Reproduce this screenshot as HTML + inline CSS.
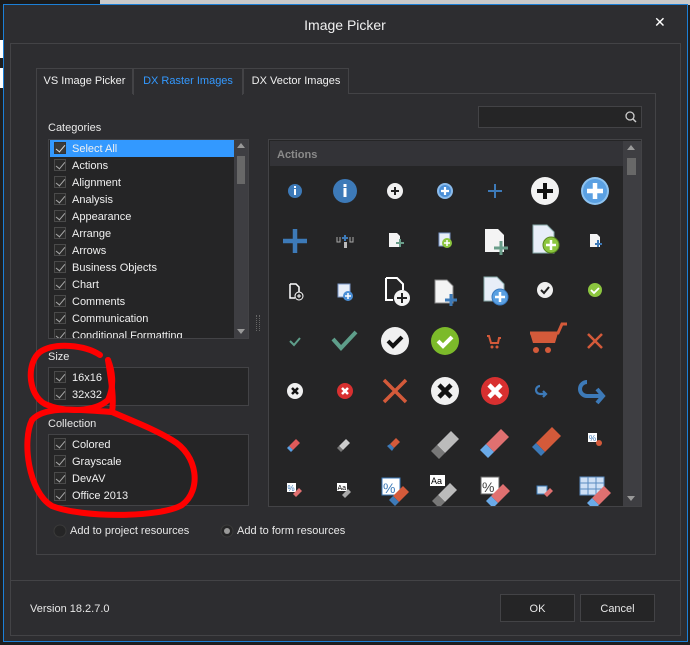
<!DOCTYPE html>
<html><head><meta charset="utf-8"><style>
*{margin:0;padding:0;box-sizing:border-box}
body{width:690px;height:645px;background:#1e1e1e;position:relative;overflow:hidden;font-family:"Liberation Sans",sans-serif;font-size:11px;color:#e8e8e8}
.a{position:absolute}
.win{left:3px;top:4px;width:685px;height:638px;background:#2d2d30;border:1px solid #1c7fd6}
.box{border:1px solid #434346}
.lb{background:#252526;border:1px solid #434346}
.row{position:absolute;left:1px;height:17px;width:184px;line-height:19px;padding-left:22px;color:#f0f0f0;font-size:11px}
.cb{position:absolute;left:4px;top:2px;width:12px;height:12px;border:1px solid #4a4a4a;background:#2a2a2a}
.cb:after{content:"";position:absolute;left:3px;top:0px;width:4px;height:8px;border-right:1.5px solid #aaa;border-bottom:1.5px solid #aaa;transform:rotate(40deg)}
.sel{background:#3399ff}
.sel .cb{background:#3b3b3b;border-color:#333}
.sel .cb:after{border-color:#ddd}
.tab{top:68px;height:26px;border:1px solid #434346;border-bottom:none;line-height:24px;text-align:center;font-size:11px;background:#2d2d30}
.btn{top:594px;width:75px;height:28px;border:1px solid #434346;background:#252526;text-align:center;line-height:28px;font-size:11px}
</style></head><body>
<div class="a" style="left:0;top:0;width:100px;height:5px;background:#1a1a1a"></div>
<div class="a" style="left:100px;top:0;width:590px;height:5px;background:#c9c9c9"></div>
<div class="a" style="left:0;top:40px;width:3px;height:18px;background:#fff"></div>
<div class="a" style="left:0;top:68px;width:3px;height:20px;background:#fff"></div>
<div class="a win"></div>
<div class="a" style="left:0;top:17px;width:690px;text-align:center;font-size:14px;color:#f0f0f0">Image Picker</div>
<div class="a" style="left:654px;top:14px;font-size:14px;color:#fff">✕</div>
<div class="a box" style="left:10px;top:43px;width:671px;height:593px"></div>
<div class="a" style="left:10px;top:580px;width:671px;height:1px;background:#434346"></div>
<div class="a box" style="left:36px;top:93px;width:620px;height:462px"></div>
<div class="a tab" style="left:36px;width:97px;color:#f0f0f0">VS Image Picker</div>
<div class="a tab" style="left:133px;width:110px;color:#3399ff;height:27px">DX Raster Images</div>
<div class="a tab" style="left:243px;width:106px;color:#f0f0f0">DX Vector Images</div>
<div class="a lb" style="left:478px;top:106px;width:164px;height:22px"></div>
<svg class="a" style="left:624px;top:110px" width="14" height="14"><circle cx="6" cy="6" r="4" fill="none" stroke="#ccc" stroke-width="1.3"/><line x1="9" y1="9" x2="12" y2="12" stroke="#ccc" stroke-width="1.5"/></svg>
<div class="a" style="left:48px;top:122px">Categories</div>
<div class="a lb" style="left:48px;top:139px;width:201px;height:200px;overflow:hidden">
<div class="row sel" style="top:0"><span class="cb"></span>Select All</div>
<div class="row" style="top:17px"><span class="cb"></span>Actions</div>
<div class="row" style="top:34px"><span class="cb"></span>Alignment</div>
<div class="row" style="top:51px"><span class="cb"></span>Analysis</div>
<div class="row" style="top:68px"><span class="cb"></span>Appearance</div>
<div class="row" style="top:85px"><span class="cb"></span>Arrange</div>
<div class="row" style="top:102px"><span class="cb"></span>Arrows</div>
<div class="row" style="top:119px"><span class="cb"></span>Business Objects</div>
<div class="row" style="top:136px"><span class="cb"></span>Chart</div>
<div class="row" style="top:153px"><span class="cb"></span>Comments</div>
<div class="row" style="top:170px"><span class="cb"></span>Communication</div>
<div class="row" style="top:187px"><span class="cb"></span>Conditional Formatting</div>
<div class="a" style="left:185px;top:0;width:15px;height:198px;background:#3e3e42"></div>
<div class="a" style="left:188px;top:16px;width:8px;height:28px;background:#686868"></div>
<div class="a" style="left:188px;top:3px;width:0;height:0;border:4px solid transparent;border-bottom:5px solid #999;border-top:none"></div>
<div class="a" style="left:188px;top:189px;width:0;height:0;border:4px solid transparent;border-top:5px solid #999;border-bottom:none"></div>
</div>
<div class="a" style="left:256px;top:315px;width:4px;height:16px;border-left:1px dotted #666;border-right:1px dotted #666"></div>
<div class="a" style="left:48px;top:351px">Size</div>
<div class="a lb" style="left:48px;top:367px;width:201px;height:39px">
<div class="row" style="top:1px"><span class="cb"></span>16x16</div>
<div class="row" style="top:18px"><span class="cb"></span>32x32</div></div>
<div class="a" style="left:48px;top:418px">Collection</div>
<div class="a lb" style="left:48px;top:434px;width:201px;height:72px">
<div class="row" style="top:1px"><span class="cb"></span>Colored</div>
<div class="row" style="top:18px"><span class="cb"></span>Grayscale</div>
<div class="row" style="top:35px"><span class="cb"></span>DevAV</div>
<div class="row" style="top:52px"><span class="cb"></span>Office 2013</div></div>
<div class="a lb" style="left:268px;top:139px;width:374px;height:368px"></div>
<div class="a" style="left:270px;top:141px;width:353px;height:25px;background:#333337;color:#8a8a8a;font-weight:bold;padding:8px 0 0 7px">Actions</div>
<div class="a" style="left:623px;top:141px;width:18px;height:365px;background:#3e3e42"></div>
<div class="a" style="left:627px;top:158px;width:9px;height:17px;background:#686868"></div>
<div class="a" style="left:627px;top:145px;border:4.5px solid transparent;border-bottom:5px solid #999;border-top:none"></div>
<div class="a" style="left:627px;top:496px;border:4.5px solid transparent;border-top:5px solid #999;border-bottom:none"></div>
<svg class="a" style="left:0;top:0" width="690" height="645">
<defs><clipPath id="cp"><rect x="270" y="166" width="353" height="340"/></clipPath></defs>
<g clip-path="url(#cp)">
<circle cx="295" cy="191" r="7" fill="#3d7ab8"/><rect x="294" y="189" width="2" height="6" fill="#fff"/><rect x="294" y="186" width="2" height="2" fill="#fff"/>
<circle cx="345" cy="191" r="12" fill="#3d7ab8"/><rect x="343.5" y="188" width="3" height="9" fill="#fff"/><rect x="343.5" y="184" width="3" height="3" fill="#fff"/>
<circle cx="395" cy="191" r="8" fill="#f0f0f0"/><path d="M391 191h8M395 187v8" stroke="#222" stroke-width="2"/>
<circle cx="445" cy="191" r="8" fill="#8bbbea"/><circle cx="445" cy="191" r="6" fill="#4b8fd6"/><path d="M441 191h8M445 187v8" stroke="#fff" stroke-width="2.2"/>
<path d="M488 191h14M495 184v14" stroke="#3d7ab8" stroke-width="2"/>
<circle cx="545" cy="191" r="14" fill="#f2f2f2"/><path d="M537 191h16M545 183v16" stroke="#111" stroke-width="4"/>
<circle cx="595" cy="191" r="14" fill="#8ec3f0"/><circle cx="595" cy="191" r="12" fill="#5aa0e2"/><path d="M587 191h16M595 183v16" stroke="#fff" stroke-width="4.5"/>
<path d="M283 241h24M295 229v24" stroke="#3d7ab8" stroke-width="4.5"/>
<path d="M337 237v5h3v-5M350 237v5h3v-5" stroke="#aaa" fill="none"/><path d="M342 238h6M345 235v6" stroke="#3d7ab8" stroke-width="2"/><rect x="344" y="242" width="3" height="6" fill="#bbb"/>
<path d="M389 233h8l3 3v11h-11z" fill="#f4f4f4"/><path d="M396 243h8M400 239v8" stroke="#6a9e8a" stroke-width="2"/>
<rect x="439" y="233" width="11" height="13" fill="#e8eef8" stroke="#7a98c8"/><circle cx="447" cy="243" r="5" fill="#8cc63f"/><path d="M444 243h6M447 240v6" stroke="#fff" stroke-width="1.5"/>
<path d="M485 229h13l6 6v17h-19z" fill="#f4f4f4"/><path d="M494 248h14M501 241v14" stroke="#6a9e8a" stroke-width="3"/>
<path d="M533 225h14l7 7v21h-21z" fill="#e8eef8" stroke="#8aa"/><circle cx="551" cy="245" r="8" fill="#8cc63f" stroke="#5b8a20"/><path d="M546 245h10M551 240v10" stroke="#fff" stroke-width="2.5"/>
<path d="M590 234h7l3 3v10h-10z" fill="#f4f4f4"/><path d="M595 244h7M598 240v7" stroke="#3d7ab8" stroke-width="2"/>
<path d="M290 284h6l3 3v5M290 284v14h5" fill="none" stroke="#fff" stroke-width="1.5"/><circle cx="299" cy="296" r="4" fill="#222" stroke="#fff"/><path d="M297 296h4M299 294v4" stroke="#fff"/>
<rect x="338" y="284" width="12" height="13" fill="#e8eef8" stroke="#7a98c8"/><circle cx="348" cy="296" r="5" fill="#4b8fd6"/><path d="M345 296h6M348 293v6" stroke="#fff" stroke-width="1.5"/>
<path d="M386 278h11l6 6v6M386 278v22h7" fill="none" stroke="#fff" stroke-width="2"/><circle cx="402" cy="298" r="8" fill="#f4f4f4"/><path d="M397 298h10M402 293v10" stroke="#222" stroke-width="2"/>
<path d="M435 280h12l6 6v17h-18z" fill="#f4f4f4" stroke="#888"/><path d="M445 300h12M451 294v12" stroke="#3d7ab8" stroke-width="3"/>
<path d="M484 277h13l7 7v17h-20z" fill="#e8eef8" stroke="#8aa"/><circle cx="500" cy="297" r="8" fill="#5aa0e2" stroke="#3a7ac0"/><path d="M495 297h10M500 292v10" stroke="#fff" stroke-width="2.5"/>
<circle cx="545" cy="290" r="8" fill="#f0f0f0"/><path d="M541 290l3 3 5-6" stroke="#222" stroke-width="2" fill="none"/>
<circle cx="595" cy="290" r="7" fill="#8cc63f"/><path d="M591 290l3 3 5-5" stroke="#fff" stroke-width="1.8" fill="none"/>
<path d="M290 341l4 4 6-7" stroke="#5e9e8a" stroke-width="2" fill="none"/>
<path d="M333 339l8 9 15-16" stroke="#5e9e8a" stroke-width="4" fill="none"/>
<circle cx="395" cy="341" r="14" fill="#f0f0f0"/><path d="M388 341l5 5 9-9" stroke="#111" stroke-width="4" fill="none"/>
<circle cx="445" cy="341" r="14" fill="#7cba2a"/><path d="M438 341l5 5 9-9" stroke="#fff" stroke-width="4" fill="none"/>
<path d="M487 336h2l2 7h7l1-5h2" stroke="#d45a3a" stroke-width="2" fill="none"/><circle cx="492" cy="347" r="1.5" fill="#d45a3a"/><circle cx="497" cy="347" r="1.5" fill="#d45a3a"/>
<path d="M530 333h28l4-9h5" stroke="#d45a3a" stroke-width="3" fill="none"/><path d="M530 333h28l-3 10h-22z" fill="#d45a3a"/><circle cx="536" cy="350" r="3" fill="#d45a3a"/><circle cx="548" cy="350" r="3" fill="#d45a3a"/>
<path d="M588 334l14 14M602 334l-14 14" stroke="#d45a3a" stroke-width="2.5"/>
<circle cx="295" cy="391" r="8" fill="#f0f0f0"/><path d="M292 388l6 6M298 388l-6 6" stroke="#111" stroke-width="2.5"/>
<circle cx="345" cy="391" r="8" fill="#d83030"/><path d="M342 388l6 6M348 388l-6 6" stroke="#fff" stroke-width="2.5"/>
<path d="M384 380l22 22M406 380l-22 22" stroke="#d45a3a" stroke-width="3.5"/>
<circle cx="445" cy="391" r="14" fill="#f0f0f0"/><path d="M439 385l12 12M451 385l-12 12" stroke="#111" stroke-width="4.5"/>
<circle cx="495" cy="391" r="14" fill="#d83030"/><path d="M489 385l12 12M501 385l-12 12" stroke="#fff" stroke-width="4.5"/>
<path d="M540 386a4 4 0 1 0 0 8h5M543 391l3 3-3 3" stroke="#3d7ab8" stroke-width="2.2" fill="none"/>
<path d="M587 382a7 7 0 1 0 0 14h15M597 389l6 7-6 7" stroke="#3d7ab8" stroke-width="4" fill="none"/>
<path d="M289 446l7-7 4 4-7 7z" fill="#e05a5a"/><path d="M287 448l2-2 4 4-2 2z" fill="#5aa0e2"/>
<path d="M339 446l7-7 4 4-7 7z" fill="#ccc"/><path d="M337 448l2-2 4 4-2 2z" fill="#777"/>
<path d="M390 444l6-6 4 4-6 6z" fill="#d45a3a"/><path d="M387 446l3-2 4 4-2 3z" fill="#3d7ab8"/>
<path d="M437 445l14-14 8 8-14 14z" fill="#bbb"/><path d="M431 451l6-6 8 8-6 6z" fill="#777"/>
<path d="M486 444l15-15 8 8-15 15z" fill="#e07070"/><path d="M480 450l6-6 8 8-6 6z" fill="#6aaae8"/>
<path d="M536 443l16-16 9 9-16 16z" fill="#d45a3a"/><path d="M532 447l4-4 9 9-4 4z" fill="#3d7ab8"/>
<rect x="588" y="433" width="9" height="9" fill="#fff"/><text x="589" y="441" font-size="8" fill="#3d7ab8" font-family="Liberation Sans">%</text><circle cx="599" cy="443" r="3" fill="#d45a3a"/>
<rect x="287" y="483" width="9" height="9" fill="#fff"/><text x="287.5" y="491" font-size="8" fill="#3d7ab8" font-family="Liberation Sans">%</text><path d="M293 494l6-6 3 3-6 6z" fill="#e07070"/>
<rect x="337" y="483" width="10" height="8" fill="#fff"/><text x="337.5" y="490" font-size="7" fill="#000" font-family="Liberation Sans">Aa</text><path d="M342 495l6-6 3 3-6 6z" fill="#aaa"/>
<rect x="382" y="478" width="18" height="17" fill="#fff" stroke="#3d7ab8"/><text x="383" y="493" font-size="14" fill="#3d7ab8" font-family="Liberation Sans">%</text><path d="M393 496l10-10 6 6-10 10z" fill="#d45a3a"/><path d="M389 500l4-4 6 6-4 4z" fill="#3d7ab8"/>
<rect x="430" y="475" width="15" height="11" fill="#fff"/><text x="431" y="484" font-size="9" fill="#000" font-family="Liberation Sans">Aa</text><path d="M438 495l12-12 7 7-12 12z" fill="#bbb"/><path d="M432 501l6-6 7 7-6 6z" fill="#777"/>
<rect x="481" y="477" width="18" height="17" fill="#fff" stroke="#666"/><text x="482" y="492" font-size="14" fill="#444" font-family="Liberation Sans">%</text><path d="M491 496l12-12 7 7-12 12z" fill="#e07070"/><path d="M486 501l5-5 7 7-5 5z" fill="#6aaae8"/>
<rect x="537" y="486" width="10" height="8" fill="#cde" stroke="#3d7ab8"/><path d="M544 494l6-6 3 3-6 6z" fill="#e07070"/>
<rect x="580" y="477" width="24" height="18" fill="#cfe0f5" stroke="#5a8ac0"/><path d="M580 483h24M580 489h24M588 477v18M596 477v18" stroke="#5a8ac0"/><path d="M592 498l12-12 7 7-12 12z" fill="#e07070"/><path d="M587 503l5-5 7 7-5 5z" fill="#6aaae8"/>
</g>
<path d="M100 355C85 345 55 342 40 352C26 363 28 395 45 404C65 413 95 412 108 400C115 385 112 370 108 360" fill="none" stroke="#f00" stroke-width="6" stroke-linecap="round"/>
<path d="M108 360C112 385 114 400 112 412C80 410 45 405 32 420C22 440 28 492 52 506C82 518 160 518 182 505C202 490 198 455 172 440C152 428 130 420 112 412" fill="none" stroke="#f00" stroke-width="6" stroke-linecap="round"/>
</svg>
<svg class="a" style="left:53px;top:524px" width="14" height="14"><circle cx="7" cy="7" r="6" fill="#252526" stroke="#3a3a3a"/></svg>
<div class="a" style="left:70px;top:525px">Add to project resources</div>
<svg class="a" style="left:220px;top:524px" width="14" height="14"><circle cx="7" cy="7" r="6" fill="#252526" stroke="#3a3a3a"/><circle cx="7" cy="7" r="3" fill="#999"/></svg>
<div class="a" style="left:237px;top:525px">Add to form resources</div>
<div class="a" style="left:30px;top:603px">Version 18.2.7.0</div>
<div class="a btn" style="left:500px">OK</div>
<div class="a btn" style="left:580px">Cancel</div>
</body></html>
